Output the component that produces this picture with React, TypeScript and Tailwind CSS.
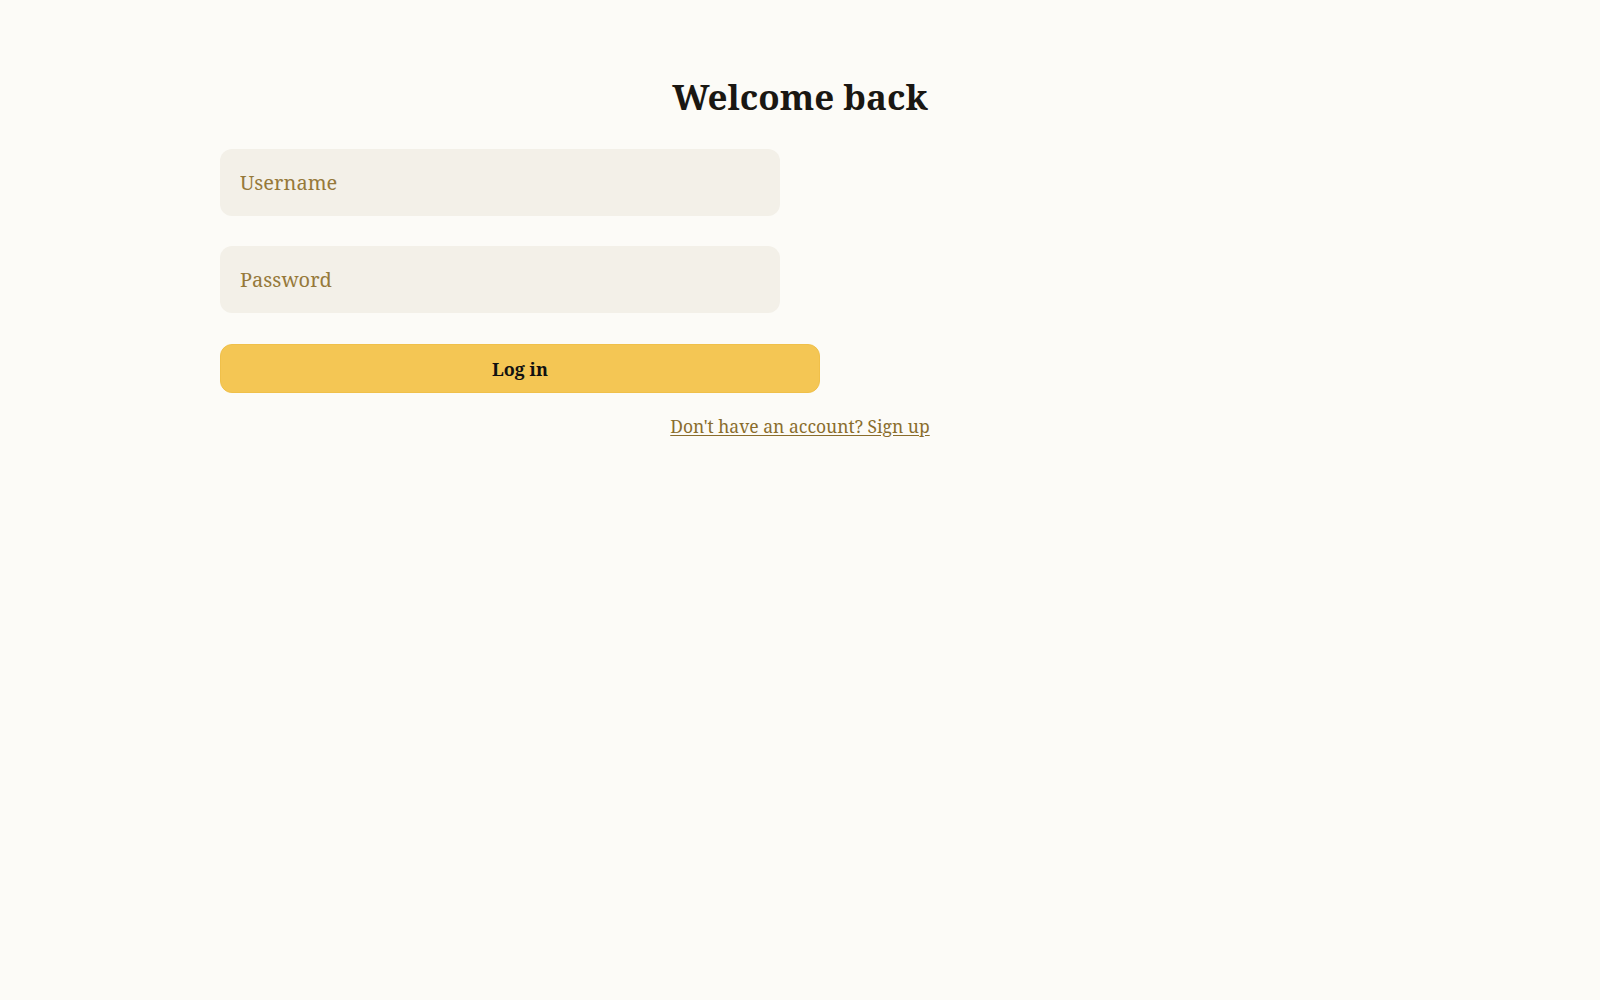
export default function App() {
  return (
    <div
      className="min-h-screen w-full bg-[#fcfbf7] text-[#1a1712]"
      style={{ fontFamily: '"Noto Serif", "DejaVu Serif", serif' }}
    >
      <div className="mx-auto flex max-w-[1160px] flex-col pt-[77px]">
        <h1 className="text-center text-[35px] font-bold leading-[40px]">Welcome back</h1>

        <form className="mt-[32px] flex flex-col" onSubmit={(e) => e.preventDefault()}>
          {/* Fields */}
          <input
            type="text"
            placeholder="Username"
            className="h-[67px] w-[560px] rounded-xl bg-[#f3f0e8] px-5 text-xl text-[#1a1712] outline-none placeholder:text-[#96793a]"
          />
          <input
            type="password"
            placeholder="Password"
            className="mt-[30px] h-[67px] w-[560px] rounded-xl bg-[#f3f0e8] px-5 text-xl text-[#1a1712] outline-none placeholder:text-[#96793a]"
          />

          <button
            type="submit"
            className="mt-[31px] h-[49px] w-[600px] cursor-pointer rounded-xl border border-[#f0c04a] bg-[#f4c654] text-lg font-bold text-[#111]"
          >
            Log in
          </button>
        </form>

        <a
          href="#"
          className="mt-[19px] self-center text-[17.5px] leading-7 text-[#8a6d2c] underline underline-offset-2"
        >
          Don't have an account? Sign up
        </a>
      </div>
    </div>
  )
}
